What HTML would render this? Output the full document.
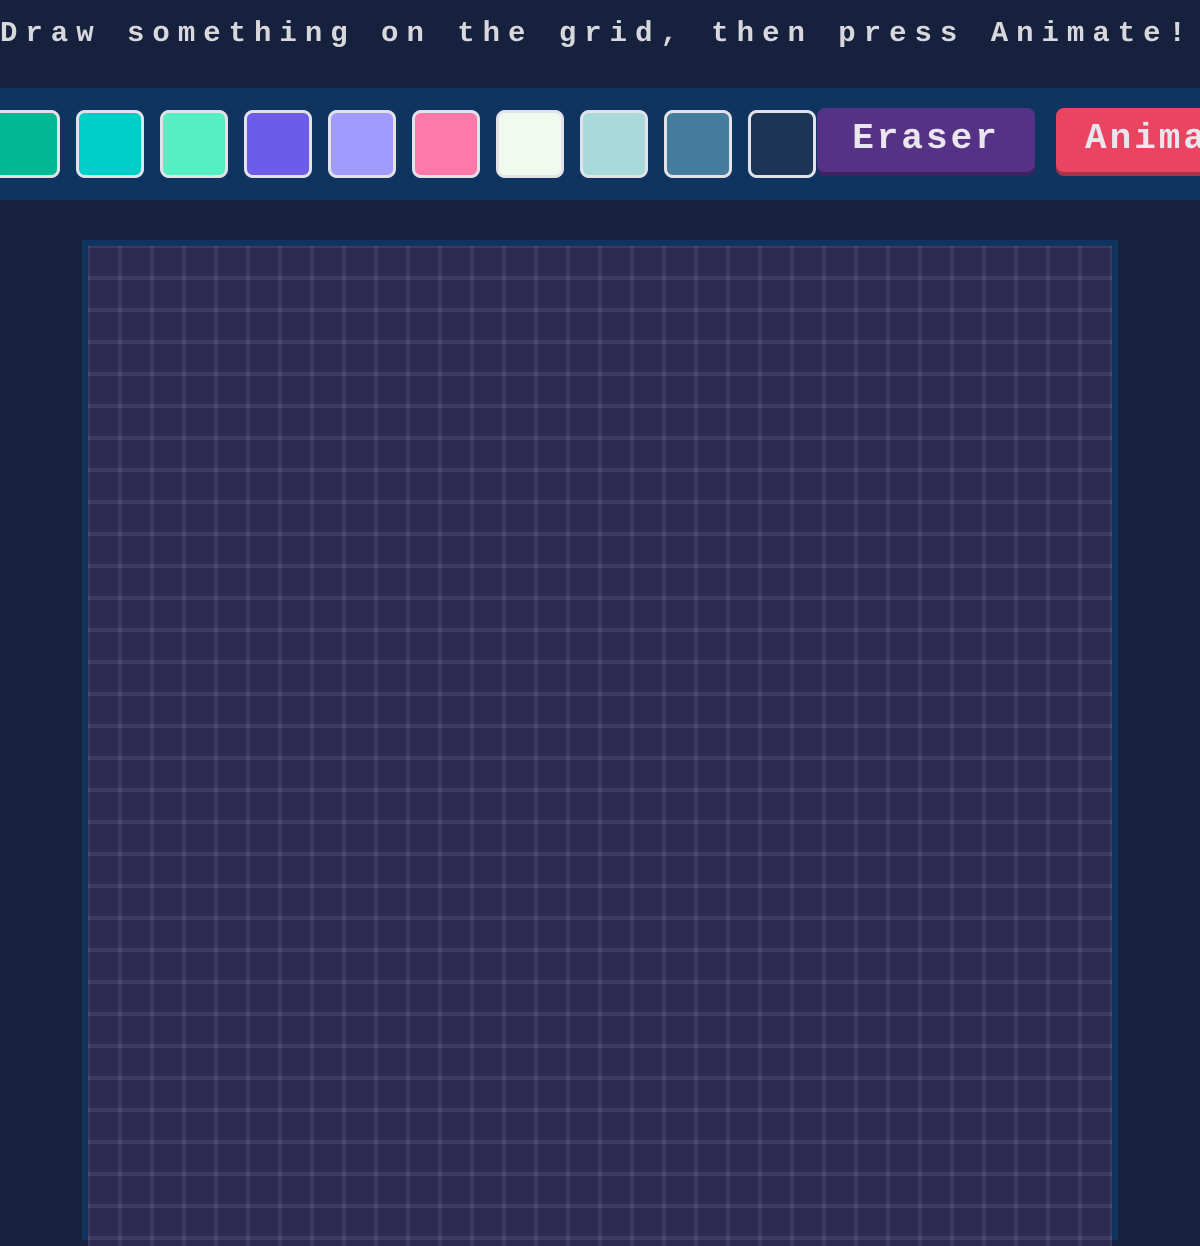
<!DOCTYPE html>
<html><head><meta charset="utf-8"><style>
html,body{margin:0;padding:0;width:1200px;height:1200px;overflow:hidden;background:#16213e;}
.title{position:absolute;left:0;top:14px;width:1200px;white-space:nowrap;font-family:"Liberation Mono",monospace;font-weight:bold;font-size:29px;letter-spacing:8px;color:#d8d8dc;line-height:40px;}
.bar{position:absolute;left:0;top:88px;width:1200px;height:112px;background:#0f3460;}
.sw{position:absolute;top:110px;width:68px;height:68px;box-sizing:border-box;border:3px solid #e2e2e8;border-radius:9px;}
.btn{position:absolute;top:108px;height:64px;border-radius:8px;font-family:"Liberation Mono",monospace;font-weight:bold;font-size:36px;color:#ebe6ee;line-height:62px;letter-spacing:3px;white-space:nowrap;overflow:hidden;}
.grid{position:absolute;left:82px;top:240px;width:1036px;height:1000px;background:#0f3460;}
.cells{position:absolute;left:88px;top:246px;width:1024px;height:1000px;background-color:#2d2b52;
background-image:linear-gradient(to right,rgba(255,255,255,0.07) 0,rgba(255,255,255,0.07) 2px,transparent 2px,transparent 30px,rgba(255,255,255,0.07) 30px),
linear-gradient(to bottom,rgba(255,255,255,0.07) 0,rgba(255,255,255,0.07) 2px,transparent 2px,transparent 30px,rgba(255,255,255,0.07) 30px);
background-size:32px 32px;}
</style></head><body>
<div class="title">Draw something on the grid, then press Animate!</div>
<div class="bar"></div>
<div class="sw" style="left:-8px;background:#00b894"></div>
<div class="sw" style="left:76px;background:#00cec9"></div>
<div class="sw" style="left:160px;background:#55efc4"></div>
<div class="sw" style="left:244px;background:#6c5ce7"></div>
<div class="sw" style="left:328px;background:#a29bfe"></div>
<div class="sw" style="left:412px;background:#fd79a8"></div>
<div class="sw" style="left:496px;background:#f1faee"></div>
<div class="sw" style="left:580px;background:#a8dadc"></div>
<div class="sw" style="left:664px;background:#457b9d"></div>
<div class="sw" style="left:748px;background:#1d3557"></div>
<div class="btn" style="left:817px;width:218px;background:#553285;box-shadow:0 4px 0 #3d2363;text-align:center;">Eraser</div>
<div class="btn" style="left:1056px;width:160px;background:#e94560;box-shadow:0 4px 0 #a8324a;padding-left:29px;box-sizing:border-box;">Animate</div>
<div class="grid"></div>
<div class="cells"></div>
</body></html>
